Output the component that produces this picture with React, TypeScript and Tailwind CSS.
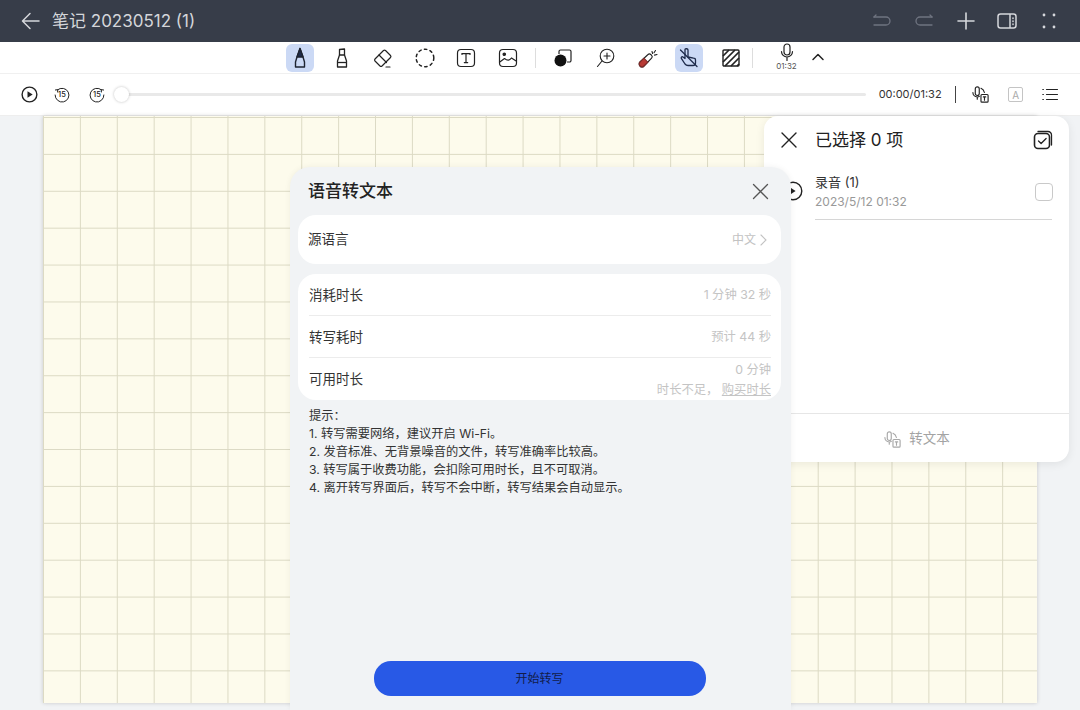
import React from "react";

const font = { fontFamily: '"Inter","Noto Sans CJK SC",sans-serif' };

function I({ children, w = 24, h = 24, color = "#222", sw = 1.6 }: { children: React.ReactNode; w?: number; h?: number; color?: string; sw?: number }) {
  return (
    <svg width={w} height={h} viewBox={`0 0 ${w} ${h}`} fill="none" stroke={color} strokeWidth={sw} strokeLinecap="round" strokeLinejoin="round">
      {children}
    </svg>
  );
}

function Tool({ active, children }: { active?: boolean; children: React.ReactNode }) {
  return (
    <div className="w-[41.6px] h-full flex items-center justify-center shrink-0">
      <div className={`w-[28px] h-[28px] rounded-[6px] flex items-center justify-center ${active ? "bg-[#cbd9f5]" : ""}`}>{children}</div>
    </div>
  );
}

function Replay({ flip }: { flip?: boolean }) {
  return (
    <div className="relative w-[16px] h-[16px] flex items-center justify-center">
      <svg width="16" height="16" viewBox="0 0 16 16" fill="none" stroke="#222" strokeWidth="1" strokeLinecap="round" className={flip ? "-scale-x-100 absolute inset-0" : "absolute inset-0"}>
        <path d="M3.6 2.8A6.9 6.9 0 1 1 1.1 8" />
        <path d="M1.4 3 3.8 2.6 3.6 5" />
      </svg>
      <span className="relative text-[7.5px] leading-none text-[#222] font-medium">15</span>
    </div>
  );
}

function SpeechDoc({ color = "#222", size = 20 }: { color?: string; size?: number }) {
  return (
    <svg width={size} height={size} viewBox="0 0 20 20" fill="none" stroke={color} strokeWidth="1.2" strokeLinecap="round" strokeLinejoin="round">
      <rect x="4.5" y="2" width="4.2" height="9" rx="2.1" />
      <path d="M2 8a4.6 4.6 0 0 0 4.6 4.6c.8 0 1.6-.2 2.2-.6M6.6 12.6V15" />
      <path d="M10.5 3.5c2 .8 3.2 2.4 3.6 4.4" />
      <rect x="10.5" y="10" width="7.5" height="8" rx="1" />
      <path d="M13 12.5h2.5M14.2 12.5V16" />
    </svg>
  );
}

export default function App() {
  return (
    <div style={font} className="relative w-[1080px] h-[710px] overflow-hidden bg-[#f1f3f5] flex flex-col">
      {/* Title bar */}
      <div className="h-[42px] shrink-0 bg-[#373d49] flex items-center pl-[20px] pr-[10px]">
        <svg width="22" height="22" viewBox="0 0 22 22" fill="none" stroke="#d5d7db" strokeWidth="1.5" strokeLinecap="round" strokeLinejoin="round">
          <path d="M19 11H3M10 3.5 2.5 11l7.5 7.5" />
        </svg>
        <span className="ml-[10px] text-[17px] leading-none text-[#d4d6da]">笔记 20230512 (1)</span>
        <div className="ml-auto flex items-center">
          <div className="w-[41.75px] flex justify-center">
            <svg width="20" height="14" viewBox="0 0 20 14" fill="none" stroke="#6f7480" strokeWidth="1.3" strokeLinecap="round"><path d="M2 3h12a4 4 0 0 1 0 8H2" /><path d="M2 3 4 1" /></svg>
          </div>
          <div className="w-[41.75px] flex justify-center">
            <svg width="20" height="14" viewBox="0 0 20 14" fill="none" stroke="#6f7480" strokeWidth="1.3" strokeLinecap="round"><path d="M18 3H6a4 4 0 0 0 0 8h12" /><path d="M18 3 16 1" /></svg>
          </div>
          <div className="w-[41.75px] flex justify-center">
            <svg width="20" height="20" viewBox="0 0 20 20" fill="none" stroke="#d5d7db" strokeWidth="1.6" strokeLinecap="round"><path d="M10 2v16M2 10h16" /></svg>
          </div>
          <div className="w-[41.75px] flex justify-center">
            <svg width="20" height="16" viewBox="0 0 20 16" fill="none" stroke="#d5d7db" strokeWidth="1.5"><rect x="1" y="1" width="18" height="14" rx="2.5" /><path d="M13 1v14" /><path d="M16 5v.5M16 8v.5M16 11v.5" strokeLinecap="round" /></svg>
          </div>
          <div className="w-[41.75px] flex justify-center">
            <svg width="14" height="16" viewBox="0 0 14 16" fill="#d5d7db"><circle cx="2" cy="2" r="1.4" /><circle cx="12" cy="2" r="1.4" /><circle cx="2" cy="14" r="1.4" /><circle cx="12" cy="14" r="1.4" /></svg>
          </div>
        </div>
      </div>

      {/* Tools */}
      <div className="h-[32px] shrink-0 bg-white border-b border-[#f0f0f0] flex items-center pl-[279.2px]">
        <Tool active>
          <svg width="16" height="22" viewBox="0 0 16 22" fill="none" stroke="#1d2330" strokeWidth="1.4" strokeLinejoin="round"><path d="M8 1.5 5 10 3.5 15v5h9v-5L11 10Z" /><path d="M8 1.5 5 10h6Z" fill="#1d2a4a" /></svg>
        </Tool>
        <Tool>
          <svg width="16" height="22" viewBox="0 0 16 22" fill="none" stroke="#222" strokeWidth="1.3" strokeLinejoin="round"><path d="M5.5 8V2.5L10.5 2V8" /><path d="M5.5 8h5l2 6v6h-9v-6Z" /><path d="M3.5 15.5h9" /></svg>
        </Tool>
        <Tool>
          <I w={22} h={22} sw={1.2}><path d="M3 12 11.5 3.5a1.5 1.5 0 0 1 2 0l5 5a1.5 1.5 0 0 1 0 2L10 19a1.5 1.5 0 0 1-2 0L3 14a1.5 1.5 0 0 1 0-2Z" /><path d="M7 8l7.5 7.5" /><path d="M14 20h4" /></I>
        </Tool>
        <Tool>
          <I w={22} h={22} sw={1.5}><circle cx="11" cy="11" r="8.8" strokeDasharray="2.4 3.4" /></I>
        </Tool>
        <Tool>
          <svg width="20" height="20" viewBox="0 0 20 20" fill="none" stroke="#222" strokeWidth="1.2" strokeLinecap="round"><rect x="1.5" y="1.5" width="17" height="17" rx="3.5" /><path d="M6 6.5V5.6h8v.9M10 5.6v9M8.3 14.6h3.4" /></svg>
        </Tool>
        <Tool>
          <svg width="20" height="20" viewBox="0 0 20 20" fill="none" stroke="#222" strokeWidth="1.2" strokeLinejoin="round"><rect x="1.5" y="1.5" width="17" height="17" rx="3.5" /><circle cx="6.3" cy="6.3" r="1.2" fill="#222" /><path d="M1.8 14 6.5 10.5c3 2.5 5 2 7-.5l4.6 3" /></svg>
        </Tool>
        <div className="w-px h-[20px] bg-[#dddddd] ml-[6px] mr-[6.4px] shrink-0" />
        <Tool>
          <svg width="20" height="20" viewBox="0 0 20 20" fill="none" stroke="#222" strokeWidth="1.2"><path d="M6 6V3.5A1.5 1.5 0 0 1 7.5 2h9A1.5 1.5 0 0 1 18 3.5v9a1.5 1.5 0 0 1-1.5 1.5H14" /><circle cx="7.5" cy="12.5" r="6" fill="#111" stroke="none" /></svg>
        </Tool>
        <div className="w-[1.4px] shrink-0" />
        <Tool>
          <I w={20} h={20} sw={1.1}><circle cx="11" cy="8" r="6.8" /><path d="M11 5v6M8 8h6" /><path d="M6 13 1.5 18.5" /></I>
        </Tool>
        <Tool>
          <svg width="22" height="22" viewBox="0 0 22 22" fill="none" stroke="#222" strokeWidth="1.1" strokeLinecap="round"><path d="M3 15 11 7.5a2 2 0 0 1 2.8 0l.8.8a2 2 0 0 1 0 2.8L7 19a2.6 2.6 0 0 1-4-4Z" fill="#fff" /><path d="M3 15l4-3.8 3.8 4L7 19a2.6 2.6 0 0 1-4-4Z" fill="#b83a35" stroke="#7a2a28" /><path d="M15 4.5l.6 2M18.5 3.5l-1.5 2.2M20 7.5l-2.5.6" /></svg>
        </Tool>
        <Tool active>
          <svg width="22" height="22" viewBox="0 0 22 22" fill="none" stroke="#1d2a4a" strokeWidth="1.3" strokeLinecap="round" strokeLinejoin="round"><path d="M7 2.5v9l-2-1.5c-1.2-.8-2.4.6-1.5 1.7L7 17c.8 1 1.8 1.5 3 1.5h5c1.5 0 2.5-1 2.5-2.5v-3c0-1-.8-1.8-2-1.8L10 10V3c0-1.6-3-1.6-3-.5Z" /><path d="M2.5 3 19 19.5" /></svg>
        </Tool>
        <Tool>
          <svg width="20" height="20" viewBox="0 0 20 20" fill="none" stroke="#222" strokeWidth="1.4"><rect x="2" y="2" width="16" height="16" rx="1" /><path d="M2 8 8 2M2 14 14 2M4 18 18 4M10 18l8-8M16 18l2-2" strokeWidth="1.7" /></svg>
        </Tool>
        <div className="w-px h-[20px] bg-[#dddddd] shrink-0" />
        <div className="w-[68px] h-full flex flex-col items-center justify-start shrink-0 pt-[1px]">
          <svg width="14" height="19" viewBox="0 0 14 19" fill="none" stroke="#222" strokeWidth="1.2" strokeLinecap="round"><rect x="4" y="1" width="6" height="11" rx="3" /><path d="M1.5 8.5a5.5 5.5 0 0 0 11 0M7 14v3.5" /></svg>
          <span className="text-[8px] leading-[9px] text-[#555]">01:32</span>
        </div>
        <svg className="-ml-[10px] -mt-[2px]" width="14" height="10" viewBox="0 0 14 10" fill="none" stroke="#222" strokeWidth="1.5" strokeLinecap="round" strokeLinejoin="round"><path d="M2 7.5 7 2.5l5 5" /></svg>
      </div>

      {/* Player */}
      <div className="h-[42px] shrink-0 bg-white border-b border-[#eeeeee] flex items-center pl-[21px] pr-[22px]">
        <svg width="17" height="17" viewBox="0 0 17 17" fill="none" stroke="#222" strokeWidth="1.4"><circle cx="8.5" cy="8.5" r="7.4" /><path d="M6.5 5.2v6.6l5.2-3.3Z" fill="#222" stroke="none" /></svg>
        <div className="ml-[16px]"><Replay /></div>
        <div className="ml-[19px]"><Replay flip /></div>
        <div className="relative ml-[16px] w-[747px] h-[3px] rounded-full bg-[#e9e9e9]">
          <div className="absolute -left-[7px] -top-[6px] w-[15px] h-[15px] rounded-full bg-white shadow-[0_0_3px_rgba(0,0,0,0.25)]" />
        </div>
        <span className="ml-[13px] text-[11px] leading-none text-[#333]">00:00/01:32</span>
        <div className="ml-[13px] w-[1.5px] h-[17px] bg-[#444]" />
        <div className="ml-[15px]"><SpeechDoc size={19} /></div>
        <div className="ml-[18px] w-[15px] h-[15px] rounded-[2px] border border-[#c4c4c4] flex items-center justify-center text-[10px] leading-none text-[#aaa]">A</div>
        <svg className="ml-[19px]" width="16" height="13" viewBox="0 0 16 13" fill="none" stroke="#222" strokeWidth="1.2" strokeLinecap="round"><path d="M4.5 1.5H15.5M4.5 6.5H15.5M4.5 11.5H15.5M.8 1.5h.6M.8 6.5h.6M.8 11.5h.6" /></svg>
      </div>

      {/* Canvas */}
      <div className="flex-1 pl-[43px] pr-[43px] pb-[7px] min-h-0">
        <div className="h-full bg-[#fdfbec] shadow-[0_0_4px_rgba(0,0,0,0.18)] bg-[linear-gradient(to_right,#dcdac4_1px,transparent_1px),linear-gradient(to_bottom,#dcdac4_1px,transparent_1px)] bg-[size:36.9px_36.9px] bg-[position:0_1px]" />
      </div>

      {/* Recording list panel */}
      <div className="absolute left-[764px] top-[116px] w-[305px] h-[346px] bg-white rounded-[14px] shadow-[0_2px_10px_rgba(0,0,0,0.08)] flex flex-col">
        <div className="h-[48px] shrink-0 flex items-center pl-[16px] pr-[16px]">
          <svg width="18" height="18" viewBox="0 0 18 18" fill="none" stroke="#222" strokeWidth="1.4" strokeLinecap="round"><path d="M2 2l14 14M16 2 2 16" /></svg>
          <span className="ml-[17px] text-[17px] leading-none text-[#222]">已选择 0 项</span>
          <svg className="ml-auto" width="20" height="20" viewBox="0 0 20 20" fill="none" stroke="#222" strokeWidth="1.3" strokeLinecap="round" strokeLinejoin="round"><rect x="1.5" y="3.5" width="15" height="15" rx="3.5" strokeWidth="1.6" /><path d="M5 1.5h10a3.5 3.5 0 0 1 3.5 3.5v10" /><path d="M5.5 11l2.6 2.5 5-5" /></svg>
        </div>
        <div className="relative mx-[51px] mr-[17px] h-[56px] border-b border-[#d6d6d6] pt-[9px]">
          <div className="text-[13px] leading-[18px] text-[#333]">录音 (1)</div>
          <div className="mt-[3px] text-[12px] leading-[16px] text-[#999]">2023/5/12 01:32</div>
          <div className="absolute right-[-1px] top-[19px] w-[18px] h-[18px] rounded-[4px] border border-[#c9c9c9]" />
          <svg className="absolute -left-[32px] top-[17px]" width="20" height="20" viewBox="0 0 20 20" fill="none" stroke="#222" strokeWidth="1.4"><circle cx="10" cy="10" r="8.8" /><path d="M8 7v6l4.6-3Z" fill="#222" stroke="none" /></svg>
        </div>
        <div className="mt-auto h-[49px] border-t border-[#e6e6e6] flex items-center justify-center pt-[2px]">
          <SpeechDoc color="#a8a8a8" size={19} />
          <span className="ml-[7px] text-[13.5px] leading-none text-[#a3a3a3]">转文本</span>
        </div>
      </div>

      {/* Dialog */}
      <div className="absolute left-[290px] top-[167px] w-[501px] h-[543px] bg-[#f1f3f5] rounded-t-[20px] pl-[8px] pr-[10px] flex flex-col shadow-[0_0_6px_rgba(0,0,0,0.06)]">
        <div className="h-[48px] shrink-0 flex items-center pl-[10px] pr-[12px]">
          <span className="text-[17px] leading-none font-medium text-[#222]">语音转文本</span>
          <svg className="ml-auto" width="17" height="17" viewBox="0 0 17 17" fill="none" stroke="#555" strokeWidth="1.3" strokeLinecap="round"><path d="M1.5 1.5l14 14M15.5 1.5l-14 14" /></svg>
        </div>
        <div className="h-[49px] shrink-0 bg-white rounded-[18px] flex items-center pl-[10px] pr-[14px]">
          <span className="text-[13.5px] leading-none text-[#333]">源语言</span>
          <span className="ml-auto text-[12px] leading-none text-[#c2c2c2]">中文</span>
          <svg className="ml-[4px]" width="7" height="12" viewBox="0 0 7 12" fill="none" stroke="#c2c2c2" strokeWidth="1.1" strokeLinecap="round"><path d="M1 1l5 5-5 5" /></svg>
        </div>
        <div className="mt-[10px] h-[126px] shrink-0 bg-white rounded-[18px] overflow-hidden pl-[11px] pr-[10px] flex flex-col">
          <div className="h-[42px] shrink-0 border-b border-[#ececec] flex items-center justify-between pt-[2px]">
            <span className="text-[13.5px] leading-none text-[#333]">消耗时长</span>
            <span className="text-[12.3px] leading-none text-[#c4c4c4]">1 分钟 32 秒</span>
          </div>
          <div className="h-[42px] shrink-0 border-b border-[#ececec] flex items-center justify-between pt-[2px]">
            <span className="text-[13.5px] leading-none text-[#333]">转写耗时</span>
            <span className="text-[12.3px] leading-none text-[#c4c4c4]">预计 44 秒</span>
          </div>
          <div className="h-[42px] shrink-0 flex items-center justify-between pt-[1px]">
            <span className="text-[13.5px] leading-none text-[#333]">可用时长</span>
            <div className="flex flex-col items-end text-[12.3px] leading-[20px] text-[#c4c4c4]">
              <span>0 分钟</span>
              <span>时长不足，&nbsp;<span className="underline">购买时长</span></span>
            </div>
          </div>
        </div>
        <div className="mt-[7px] pl-[11px] text-[12.25px] leading-[18px] text-[#333]">
          <div>提示：</div>
          <div>1. 转写需要网络，建议开启 Wi-Fi。</div>
          <div>2. 发音标准、无背景噪音的文件，转写准确率比较高。</div>
          <div>3. 转写属于收费功能，会扣除可用时长，且不可取消。</div>
          <div>4. 离开转写界面后，转写不会中断，转写结果会自动显示。</div>
        </div>
        <div className="mt-auto mb-[14px] self-center w-[332px] h-[35px] rounded-[17px] bg-[#2859e6] flex items-center justify-center text-[12px] leading-none text-[#121c4a]">开始转写</div>
      </div>
    </div>
  );
}
